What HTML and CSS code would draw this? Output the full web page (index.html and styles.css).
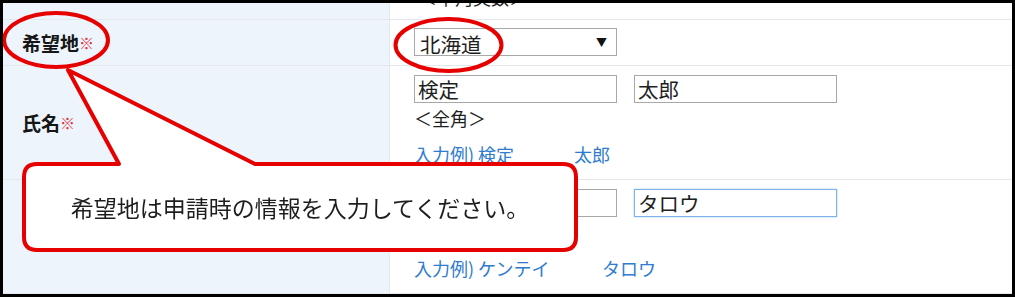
FILE: index.html
```html
<!DOCTYPE html>
<html lang="ja">
<head>
    <meta charset="UTF-8">
    <meta name="viewport" content="width=device-width, initial-scale=1.0">
    <title>希望地・氏名の入力</title>
    <link rel="stylesheet" href="styles.css">
</head>
<body>
    <div class="frame">
        <div class="form">
            <div class="row row-stub">
                <div class="label"></div>
                <div class="field"><span class="stub-text">＜半角英数＞</span></div>
            </div>

            <div class="row row-pref">
                <div class="label">希望地<span class="req">※</span></div>
                <div class="field">
                    <div class="select-wrap">
                        <select class="pref">
                            <option>北海道</option>
                            <option>青森県</option>
                        </select>
                    </div>
                </div>
            </div>

            <div class="row row-name">
                <div class="label">氏名<span class="req">※</span></div>
                <div class="field">
                    <div class="pair">
                        <input type="text" class="text" value="検定">
                        <input type="text" class="text" value="太郎">
                    </div>
                    <div class="note">＜全角＞</div>
                    <div class="example">
                        <a href="#" class="ex-key">入力例) 検定</a><a href="#">太郎</a>
                    </div>
                </div>
            </div>

            <div class="row row-kana">
                <div class="label">フリガナ<span class="req">※</span></div>
                <div class="field">
                    <div class="pair">
                        <input type="text" class="text" value="ケンテイ">
                        <input type="text" class="text focused" id="kanaMei" value="タロウ">
                    </div>
                    <div class="note">＜全角カナ＞</div>
                    <div class="example">
                        <a href="#" class="ex-key wide">入力例) ケンテイ</a><a href="#">タロウ</a>
                    </div>
                </div>
            </div>
        </div>

        <!-- red marks drawn over the form -->
        <svg class="marks" width="1015" height="297" viewBox="0 0 1015 297">
            <ellipse cx="56" cy="40" rx="52" ry="27" />
            <ellipse cx="448.5" cy="45" rx="53" ry="26" />
            <path class="bubble" d="M37 164 L119 164 L68 70 L255 164 L563 164 Q576 164 576 177 L576 237 Q576 250 563 250 L37 250 Q24 250 24 237 L24 177 Q24 164 37 164 Z" />
        </svg>
        <div class="callout-text">希望地は申請時の情報を入力してください。</div>
    </div>

    <script>
        const kana = document.getElementById('kanaMei');
        kana.focus();
        kana.setSelectionRange(kana.value.length, kana.value.length);
    </script>
</body>
</html>
```

FILE: styles.css
```css
body {
    margin: 0;
    font-family: "Noto Sans CJK JP", "Noto Sans", sans-serif;
    background: #fff;
}

.frame {
    position: relative;
    width: 1015px;
    height: 297px;
    box-sizing: border-box;
    border: 3px solid #000;
    overflow: hidden;
    background: #fff;
}

.row {
    display: flex;
    border-bottom: 1px solid #e4e8ed;
}

.label {
    width: 367px;
    flex: none;
    padding-left: 19px;
    display: flex;
    align-items: center;
    background: #eef4fc;
    border-right: 1px solid #e3e8ef;
    font-size: 19px;
    font-weight: bold;
    color: #161616;
}

.req {
    color: #e0303a;
    font-size: 15px;
    font-weight: normal;
}

.field {
    flex: 1;
    padding-left: 24px;
    display: flex;
    flex-direction: column;
    color: #1e1e1e;
}

.row-stub {
    height: 16px;
    overflow: hidden;
}

.stub-text {
    display: block;
    margin-top: -19px;
    padding-left: 5px;
    font-size: 18px;
    line-height: 26px;
}

.row-pref {
    height: 45px;
}

.row-pref .field {
    justify-content: center;
}

.select-wrap {
    position: relative;
    width: 203px;
}

.select-wrap::after {
    content: "▼";
    position: absolute;
    right: 10px;
    top: 6px;
    font-size: 11px;
    color: #111;
    pointer-events: none;
}

.pref {
    appearance: none;
    -webkit-appearance: none;
    width: 203px;
    height: 28px;
    box-sizing: border-box;
    border: 1px solid #a8a8a8;
    border-radius: 0;
    background: #fff;
    padding: 0 0 0 5px;
    font-family: inherit;
    font-size: 20.5px;
    color: #1e1e1e;
}

.row-name .field,
.row-kana .field {
    padding-top: 9px;
    padding-bottom: 12px;
}

.pair {
    display: flex;
    gap: 17px;
}

.text {
    width: 203px;
    height: 28px;
    box-sizing: border-box;
    margin: 0;
    border: 1px solid #a8a8a8;
    padding: 0 3px;
    font-family: inherit;
    font-size: 20.5px;
    color: #1e1e1e;
    outline: none;
}

.text.focused {
    border-color: #7cb2e8;
    box-shadow: 0 0 2px #a9cdf2;
}

.note {
    margin-top: 2px;
    font-size: 18px;
    line-height: 26px;
}

.example {
    margin-top: 10px;
    font-size: 18px;
    line-height: 26px;
}

.example a {
    color: #2e7bcf;
    text-decoration: none;
}

.ex-key {
    display: inline-block;
    width: 160px;
}

.ex-key.wide {
    width: 188px;
}

.marks {
    position: absolute;
    top: -3px;
    left: -3px;
    pointer-events: none;
}

.marks ellipse {
    fill: none;
    stroke: #e60000;
    stroke-width: 4;
}

.marks .bubble {
    fill: #fff;
    stroke: #e60000;
    stroke-width: 4;
    stroke-linejoin: round;
}

.callout-text {
    position: absolute;
    left: 21px;
    top: 161px;
    width: 552px;
    height: 86px;
    display: flex;
    align-items: center;
    justify-content: center;
    font-size: 23px;
    color: #1e1e1e;
}
```
